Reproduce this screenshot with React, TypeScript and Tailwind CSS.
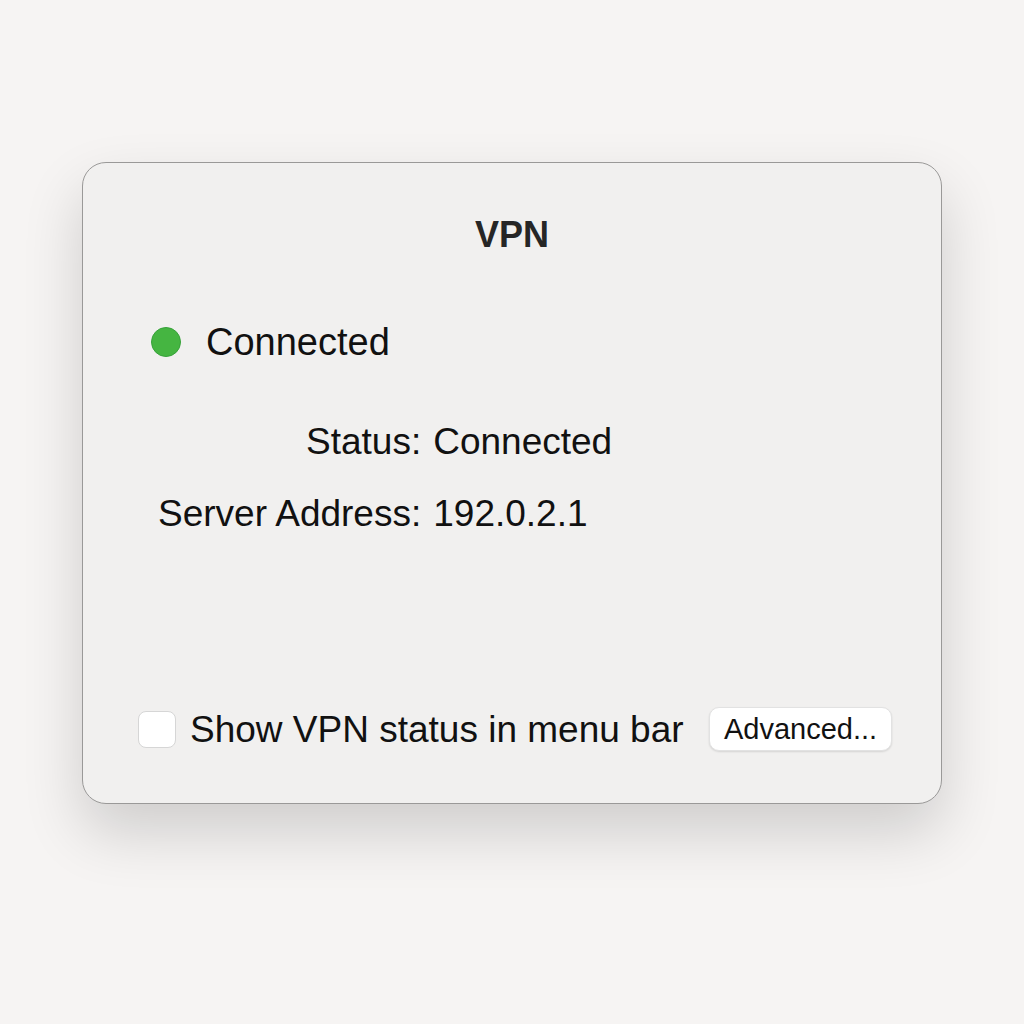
import React from "react";

const font = { fontFamily: '"Liberation Sans", Arial, sans-serif' };

export default function App() {
  return (
    <div className="min-h-[1024px] w-[1024px] bg-[#f6f4f3] pt-[162px] pl-[82px]" style={font}>
      {/* window */}
      <div className="relative flex h-[642px] w-[860px] flex-col rounded-[24px] border border-[#9a9998] bg-[#f1f0ef] shadow-[0_28px_60px_rgba(0,0,0,0.16)]">
        <h1 className="mt-[54px] text-center text-[36px] font-bold leading-none text-[#262626]">VPN</h1>

        <div className="ml-[68px] mt-[70px] flex items-center gap-[25px]">
          <span className="h-[30px] w-[30px] rounded-full border border-[#37a23a] bg-[#45b541]" />
          <span className="text-[38px] leading-none text-[#111]">Connected</span>
        </div>

        <div className="ml-[75px] mt-[62px] grid grid-cols-[auto_auto] justify-start gap-x-[12px] gap-y-[35px] text-[37px] leading-none text-[#111]">
          <span className="text-right">Status:</span>
          <span>Connected</span>
          <span className="text-right">Server Address:</span>
          <span>192.0.2.1</span>
        </div>

        <div className="mt-auto mb-[52px] flex items-center pl-[55px] pr-[49px]">
          <span className="h-[37px] w-[38px] rounded-[8px] border border-[#d6d6d6] bg-white" />
          <span className="ml-[14px] text-[37px] leading-none text-[#111]">Show VPN status in menu bar</span>
          <button className="ml-auto flex h-[44px] w-[183px] items-center justify-center rounded-[10px] border border-[#e2e2e2] bg-white text-[29px] leading-none text-[#111] shadow-[0_1px_2px_rgba(0,0,0,0.12)]">
            Advanced...
          </button>
        </div>
      </div>
    </div>
  );
}
